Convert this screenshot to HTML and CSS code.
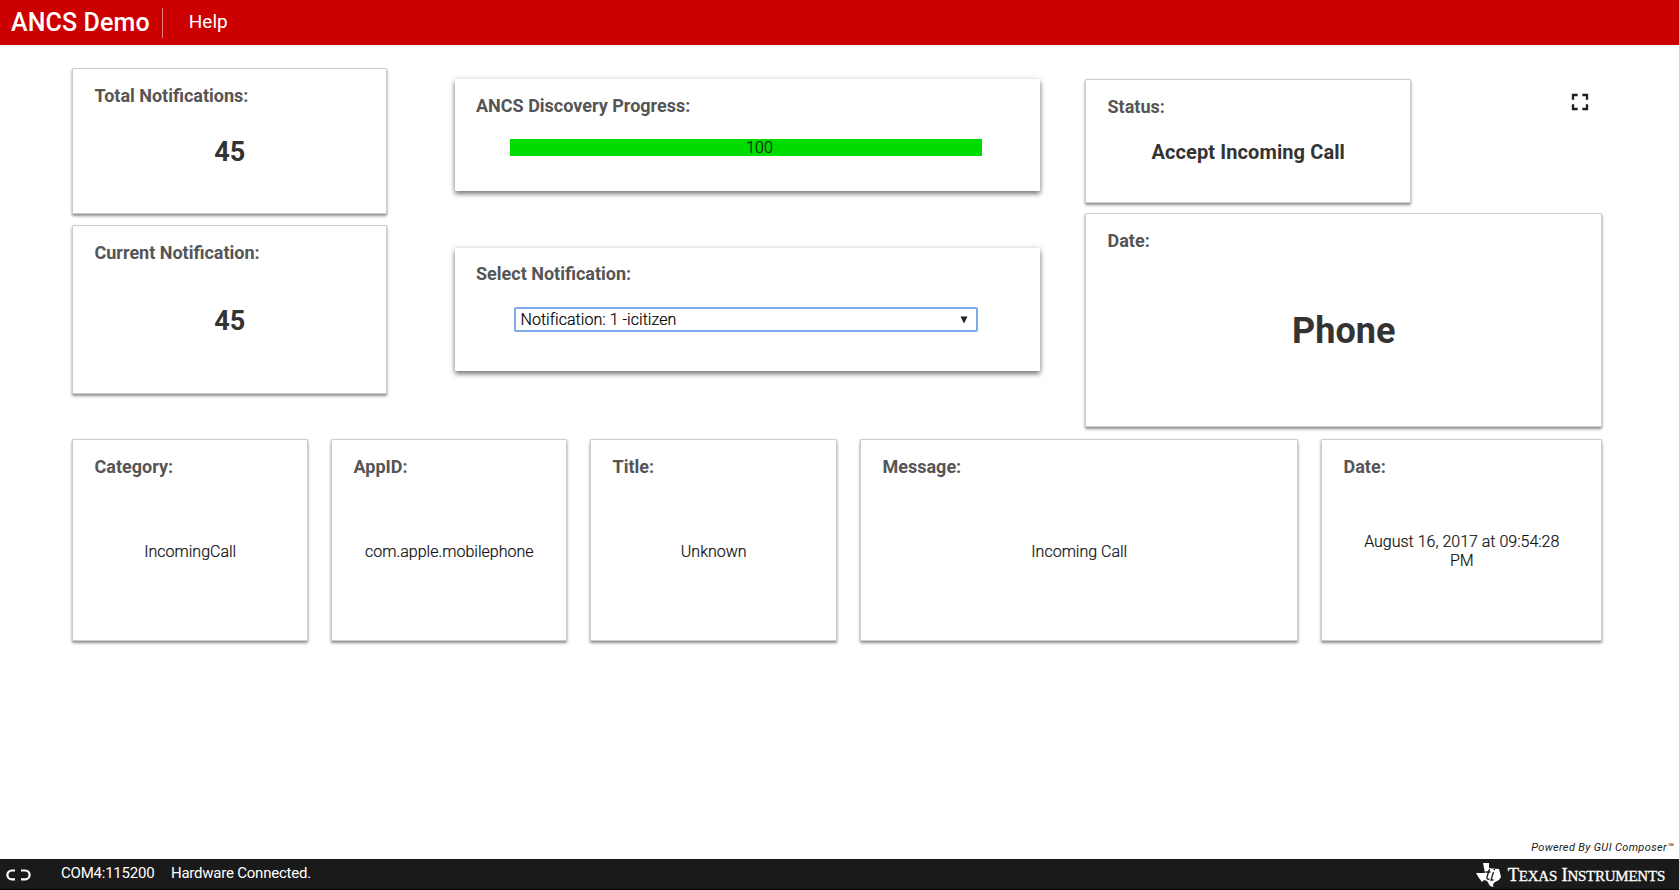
FILE: index.html
```html
<!DOCTYPE html>
<html lang="en">
<head>
<meta charset="utf-8">
<title>ANCS Demo</title>
<link rel="stylesheet" href="styles.css">
</head>
<body>
<header class="topbar">
  <h1 class="brand">ANCS Demo</h1>
  <nav class="menu"><span class="menu-item">Help</span></nav>
</header>
<main class="main">
  <div class="upper">
    <section class="col col-left">
      <article class="card total"><h2 class="label">Total Notifications:</h2><p class="value count">45</p></article>
      <article class="card current"><h2 class="label">Current Notification:</h2><p class="value count">45</p></article>
    </section>
    <section class="col col-mid">
      <article class="card raised progress-card"><h2 class="label">ANCS Discovery Progress:</h2><div class="progress"><span class="progress-text">100</span></div></article>
      <article class="card raised select-card"><h2 class="label">Select Notification:</h2><div class="select"><span class="select-text">Notification: 1 -icitizen</span><svg class="arrow" width="8" height="8" viewBox="0 0 8 8"><path d="M0.5 0.5h7L4 7.5z" fill="#222"/></svg></div></article>
    </section>
    <section class="col col-right">
      <div class="status-row">
        <article class="card status"><h2 class="label">Status:</h2><p class="value status-text">Accept Incoming Call</p></article>
        <svg class="fullscreen" width="28" height="28" viewBox="0 0 24 24"><path fill="#212121" d="M7 14H5v5h5v-2H7v-3zm-2-4h2V7h3V5H5v5zm12 7h-3v2h5v-5h-2v3zM14 5v2h3v3h2V5h-5z"/></svg>
      </div>
      <article class="card phone"><h2 class="label">Date:</h2><p class="value phone-text">Phone</p></article>
    </section>
  </div>
  <div class="lower">
    <article class="card detail"><h2 class="label">Category:</h2><p class="value">IncomingCall</p></article>
    <article class="card detail"><h2 class="label">AppID:</h2><p class="value">com.apple.mobilephone</p></article>
    <article class="card detail"><h2 class="label">Title:</h2><p class="value">Unknown</p></article>
    <article class="card detail"><h2 class="label">Message:</h2><p class="value">Incoming Call</p></article>
    <article class="card detail"><h2 class="label">Date:</h2><p class="value">August 16, 2017 at 09:54:28 PM</p></article>
  </div>
  <p class="powered">Powered By GUI Composer™</p>
</main>
<footer class="statusbar">
  <svg class="link-icon" width="28" height="14" viewBox="0 0 28 14" fill="none" stroke="#fff" stroke-width="2.200"><path d="M10 2.500H6.800a4.400 4.400 0 0 0 0 8.800H10M16 2.500h4.200a4.400 4.400 0 0 1 0 8.800H16"/></svg>
  <span class="port">COM4:115200</span>
  <span class="hardware">Hardware Connected.</span>
  <div class="ti">
    <svg class="ti-logo" width="26" height="26" viewBox="0 0 26 26"><path fill="#fff" d="M8 1h6v5l3 .5 7 .5 1 4 1 4-2 3-4 2-2 2 .5 3-3.500-1-3-5-3-1-2 2-3-4-3-5h9z"/><path d="M14.500 7l-2.500 8q-.5 3 2.500 2M10.500 10h5M18.500 10l-2.500 8h2.500M19.500 7l-.4 1.300" fill="none" stroke="#1a1a1a" stroke-width="1.300"/></svg>
    <span class="ti-name">T<small>EXAS</small> I<small>NSTRUMENTS</small></span>
  </div>
</footer>
</body>
</html>
```
FILE: styles.css
```css
* { box-sizing: border-box; }
body { margin: 0; width: 100%; height: 890px; display: flex; flex-direction: column; overflow: hidden; background: #fff; color: #212121; font-family: Roboto, "Liberation Sans", sans-serif; }
h1, h2, p { margin: 0; }
.topbar { height: 45px; flex: none; display: flex; align-items: center; background: #c00; color: #fff; }
.brand { height: 30px; padding: 0 12px 0 11px; border-right: 1px solid #e28080; font-size: 25px; line-height: 30px; font-weight: 500; letter-spacing: .12px; white-space: nowrap; }
.menu { padding: 0 0 2px 26px; font-size: 19px; line-height: 22px; }
.main { flex: 1; display: flex; flex-direction: column; padding: 23px 77px 0 72px; }
.upper { height: 371px; flex: none; display: flex; }
.col { display: flex; flex-direction: column; flex: none; }
.col-left { width: 315px; gap: 11px; }
.col-mid { width: 585px; margin-left: 68px; padding-top: 11px; gap: 57px; }
.col-right { width: 517px; margin-left: 45px; padding-top: 11px; gap: 10px; }
.card { display: flex; flex-direction: column; padding: 16px 21px 0 21.5px; background: #fff; border: 1px solid #ccc; border-radius: 1px; box-shadow: 0 2px 3px rgba(0,0,0,.45); }
.raised { border: 0; padding: 16px 22px 0 21px; box-shadow: 0 3px 5px rgba(0,0,0,.5), 0 0 6px rgba(0,0,0,.12); }
.label { font-size: 18px; line-height: 21px; font-weight: 700; color: #555; white-space: nowrap; }
.value { text-align: center; font-size: 16px; line-height: 19px; }
.total { height: 146px; }
.current { height: 169px; }
.count { font-size: 27px; line-height: 32px; font-weight: 700; color: #333; margin-top: 30px; }
.current .count { margin-top: 42px; }
.progress-card { height: 112px; }
.select-card { height: 123px; padding-top: 15px; }
.progress { width: 472px; height: 17px; margin: 23px 0 0 34px; background: #00dc00; text-align: center; padding-left: 27px; font-size: 16px; line-height: 17px; font-weight: 300; color: #111; -webkit-text-stroke: .2px #111; }
.select { width: 464px; height: 25px; margin: 23px 0 0 38px; border: 2px solid #7eaaf0; border-radius: 2px; display: flex; align-items: center; justify-content: space-between; padding: 0 8px 0 4.5px; font-size: 16px; line-height: 19px; font-weight: 300; color: #000; -webkit-text-stroke: .2px #000; letter-spacing: .04px; }
.status-row { height: 124px; display: flex; }
.status { width: 326px; height: 124px; flex: none; }
.status-text { font-size: 20px; line-height: 24px; font-weight: 700; letter-spacing: .1px; color: #333; margin-top: 23px; }
.fullscreen { margin: 9px 0 0 154.5px; }
.phone { height: 214px; }
.phone-text { font-size: 36px; line-height: 44px; font-weight: 700; color: #333; margin-top: 58px; }
.lower { display: grid; grid-template-columns: 236px 236px 247px 438px 281px; column-gap: 23px; height: 202px; flex: none; }
.detail .value { flex: 1; display: flex; align-items: center; justify-content: center; margin: 0 16px 15px; font-weight: 300; color: #111; -webkit-text-stroke: .2px #111; }
.powered { margin: auto -72px 4px auto; font-size: 11px; line-height: 14px; font-style: italic; letter-spacing: .35px; }
.statusbar { height: 31px; flex: none; display: flex; align-items: flex-start; background: #1a1a1a; border-bottom: 1px solid #000; color: #fff; font-size: 15px; line-height: 18px; letter-spacing: -.22px; }
.link-icon { margin: 9px 0 0 5px; }
.port { margin: 5px 0 0 28px; }
.hardware { margin: 5px 0 0 16.5px; }
.ti { display: flex; align-items: center; margin: 3px 14px 0 auto; gap: 7px; letter-spacing: 0; }
.ti-name { font: 400 18.5px/22px "Liberation Serif", serif; white-space: nowrap; letter-spacing: -.24px; -webkit-text-stroke: .3px #fff; }
.ti-name small { font-size: 15px; }
```
